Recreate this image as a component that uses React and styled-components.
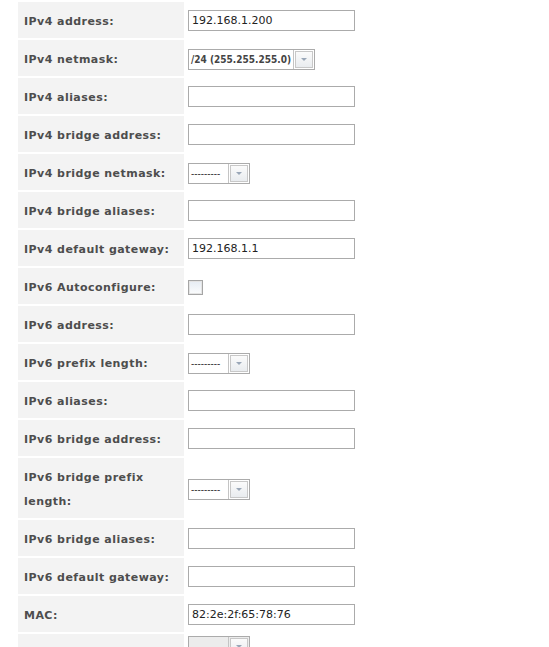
import React from "react"
import styled, { createGlobalStyle } from "styled-components"

const GlobalStyle = createGlobalStyle`
  body {
    margin: 0;
    background: #fff;
    font-family: "DejaVu Sans", Verdana, sans-serif;
  }
`

const rows = [
  { label: "IPv4 address:", kind: "text", value: "192.168.1.200" },
  { label: "IPv4 netmask:", kind: "select", value: "/24 (255.255.255.0)" },
  { label: "IPv4 aliases:", kind: "text", value: "" },
  { label: "IPv4 bridge address:", kind: "text", value: "" },
  { label: "IPv4 bridge netmask:", kind: "select", value: "---------" },
  { label: "IPv4 bridge aliases:", kind: "text", value: "" },
  { label: "IPv4 default gateway:", kind: "text", value: "192.168.1.1" },
  { label: "IPv6 Autoconfigure:", kind: "check" },
  { label: "IPv6 address:", kind: "text", value: "" },
  { label: "IPv6 prefix length:", kind: "select", value: "---------" },
  { label: "IPv6 aliases:", kind: "text", value: "" },
  { label: "IPv6 bridge address:", kind: "text", value: "" },
  { label: "IPv6 bridge prefix length:", kind: "select", value: "---------" },
  { label: "IPv6 bridge aliases:", kind: "text", value: "" },
  { label: "IPv6 default gateway:", kind: "text", value: "" },
  { label: "MAC:", kind: "text", value: "82:2e:2f:65:78:76" },
  { label: "", kind: "select", value: "", disabled: true },
]

const Page = styled.div`
  padding: 0 16px;
`

const Table = styled.table`
  border-collapse: separate;
  border-spacing: 2px;
`

const Label = styled.th`
  width: 154px;
  padding: 8px 6px 4px;
  background: #f3f3f3;
  color: #4d4d4d;
  font-size: 11px;
  font-weight: bold;
  letter-spacing: 0.45px;
  line-height: 24px;
  text-align: left;
  vertical-align: middle;
`

const Value = styled.td`
  padding: 0 2px;
  vertical-align: middle;
`

const TextInput = styled.div`
  box-sizing: border-box;
  width: 167px;
  height: 21px;
  border: 1px solid #ababab;
  padding: 0 3px;
  font-size: 11px;
  line-height: 19px;
  color: #222;
  background: #fff;
  white-space: nowrap;
`

const Select = styled.div`
  display: inline-flex;
  align-items: stretch;
  box-sizing: border-box;
  height: 21px;
  margin-top: 2px;
  border: 1px solid #ababab;
  background: ${p => (p.disabled ? "#ececec" : "#fff")};
`

const SelectText = styled.span`
  min-width: 35px;
  padding: 0 2px;
  border-right: 1px solid #c4c4c4;
  font-family: "DejaVu Sans Condensed", "DejaVu Sans", sans-serif;
  font-size: 10px;
  font-weight: ${p => (p.empty ? "normal" : "bold")};
  line-height: 19px;
  color: ${p => (p.empty ? "#333" : "#444")};
  white-space: nowrap;
`

const SelectButton = styled.span`
  display: flex;
  align-items: center;
  justify-content: center;
  box-sizing: border-box;
  width: 18px;
  margin: 1px;
  border: 1px solid #c8c8c8;
  background: linear-gradient(#fbfbfb, #e9ecef);
`

const Arrow = styled.span`
  width: 0;
  height: 0;
  border-left: 3px solid transparent;
  border-right: 3px solid transparent;
  border-top: 3px solid #9aa7b8;
`

const Check = styled.span`
  display: block;
  box-sizing: border-box;
  width: 15px;
  height: 15px;
  margin-top: 2px;
  border: 1px solid #a5a5a5;
  box-shadow: inset 0 0 0 1px #e4e4e4;
  background: linear-gradient(#e6ecf3, #fbfcfd);
`

const Field = ({ row }) => {
  if (row.kind === "check") return <Check />
  if (row.kind === "select")
    return (
      <Select disabled={row.disabled}>
        <SelectText empty={row.value.startsWith("-")}>{row.value}</SelectText>
        <SelectButton>
          <Arrow />
        </SelectButton>
      </Select>
    )
  return <TextInput>{row.value}</TextInput>
}

export default function App() {
  return (
    <Page>
      <GlobalStyle />
      <Table>
        <tbody>
          {rows.map((row, i) => (
            <tr key={i}>
              <Label>{row.label}</Label>
              <Value>
                <Field row={row} />
              </Value>
            </tr>
          ))}
        </tbody>
      </Table>
    </Page>
  )
}
